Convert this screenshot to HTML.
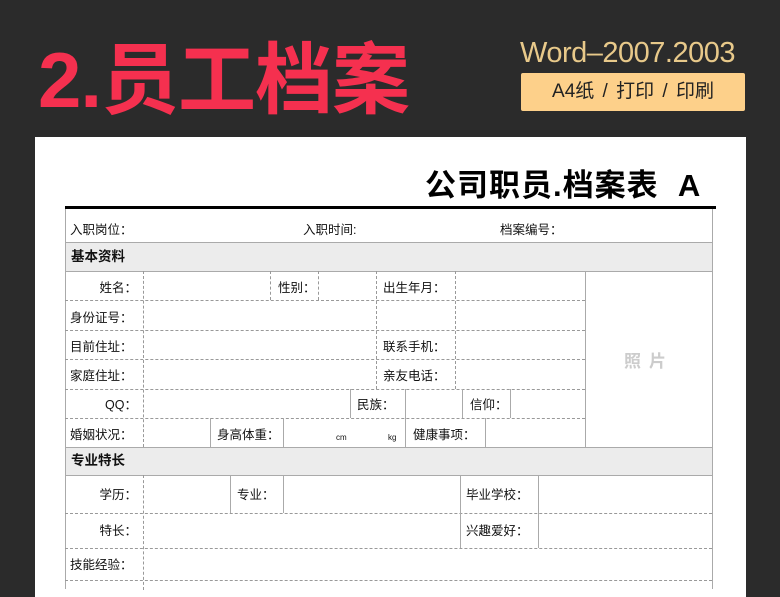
<!DOCTYPE html>
<html><head><meta charset="utf-8"><style>
*{margin:0;padding:0;box-sizing:border-box}
body{width:780px;height:585px;background:#2b2b2b;position:relative;overflow:hidden;font-family:"Liberation Sans","Noto Sans CJK SC",sans-serif}
.a{position:absolute}
.h{position:absolute;height:0;border-top:1px dashed #999}
.hs{position:absolute;height:0;border-top:1px solid #aaa}
.v{position:absolute;width:0;border-left:1px solid #aaa}
.vd{position:absolute;width:0;border-left:1px dashed #999}
.t{position:absolute;font-size:12.5px;color:#111;line-height:14px;white-space:nowrap}
.r{text-align:right;width:75px}
.sec{position:absolute;left:65px;width:647px;background:#ececec;font-weight:bold;font-size:13.5px;padding-left:6px;color:#111}
</style></head><body>
<div class="a" style="left:38px;top:30px;font-size:78px;font-weight:bold;color:#f5304f;line-height:100px;letter-spacing:-1px">2.员工档案</div>
<div class="a" style="left:520px;top:36px;font-size:29px;color:#e8c98a;line-height:34px;letter-spacing:-0.5px">Word–2007.2003</div>
<div class="a" style="left:521px;top:73px;width:224px;height:38px;background:#fdd08a;border-radius:2px;font-size:19px;color:#222;line-height:38px;text-align:center;word-spacing:3px">A4纸 / 打印 / 印刷</div>

<div class="a" style="left:35px;top:137px;width:711px;height:460px;background:#fff"></div>
<div class="a" style="left:425px;top:168px;font-size:31px;font-weight:bold;color:#000;line-height:36px;letter-spacing:1px">公司职员.档案表&nbsp;&nbsp;A</div>
<div class="a" style="left:65px;top:206px;width:651px;height:3px;background:#000"></div>

<div class="sec" style="top:242px;height:29px;line-height:29px">基本资料</div>
<div class="sec" style="top:447px;height:28px;line-height:28px">专业特长</div>

<div class="v" style="left:65px;top:209px;height:380px"></div>
<div class="v" style="left:712px;top:209px;height:380px"></div>
<div class="hs" style="left:65px;top:242px;width:647px"></div>
<div class="hs" style="left:65px;top:271px;width:647px"></div>
<div class="hs" style="left:65px;top:447px;width:647px"></div>
<div class="hs" style="left:65px;top:475px;width:647px"></div>
<div class="h" style="left:65px;top:300px;width:520px"></div>
<div class="h" style="left:65px;top:330px;width:520px"></div>
<div class="h" style="left:65px;top:359px;width:520px"></div>
<div class="h" style="left:65px;top:389px;width:520px"></div>
<div class="h" style="left:65px;top:418px;width:520px"></div>
<div class="h" style="left:65px;top:513px;width:647px"></div>
<div class="h" style="left:65px;top:548px;width:647px"></div>
<div class="h" style="left:65px;top:580px;width:647px"></div>

<div class="vd" style="left:143px;top:271px;height:176px"></div>
<div class="vd" style="left:143px;top:475px;height:115px"></div>
<div class="v" style="left:585px;top:271px;height:176px"></div>
<div class="vd" style="left:270px;top:271px;height:29px"></div>
<div class="vd" style="left:318px;top:271px;height:29px"></div>
<div class="vd" style="left:376px;top:271px;height:118px"></div>
<div class="vd" style="left:455px;top:271px;height:118px"></div>
<div class="v" style="left:350px;top:389px;height:29px"></div>
<div class="v" style="left:405px;top:389px;height:58px"></div>
<div class="v" style="left:462px;top:389px;height:29px"></div>
<div class="v" style="left:510px;top:389px;height:29px"></div>
<div class="v" style="left:210px;top:418px;height:29px"></div>
<div class="v" style="left:283px;top:418px;height:29px"></div>
<div class="v" style="left:485px;top:418px;height:29px"></div>
<div class="v" style="left:230px;top:475px;height:38px"></div>
<div class="v" style="left:283px;top:475px;height:38px"></div>
<div class="v" style="left:460px;top:475px;height:73px"></div>
<div class="v" style="left:538px;top:475px;height:73px"></div>

<div class="t" style="left:70px;top:223px">入职岗位：</div>
<div class="t" style="left:303px;top:223px">入职时间:</div>
<div class="t" style="left:500px;top:223px">档案编号：</div>

<div class="t r" style="left:62px;top:281px">姓名：</div>
<div class="t" style="left:278px;top:281px">性别：</div>
<div class="t" style="left:383px;top:281px">出生年月：</div>
<div class="t" style="left:70px;top:311px">身份证号：</div>
<div class="t" style="left:70px;top:340px">目前住址：</div>
<div class="t" style="left:383px;top:340px">联系手机：</div>
<div class="t" style="left:70px;top:369px">家庭住址：</div>
<div class="t" style="left:383px;top:369px">亲友电话：</div>
<div class="t r" style="left:62px;top:398px">QQ：</div>
<div class="t" style="left:357px;top:398px">民族：</div>
<div class="t" style="left:470px;top:398px">信仰：</div>
<div class="t" style="left:70px;top:428px">婚姻状况：</div>
<div class="t" style="left:217px;top:428px">身高体重：</div>
<div class="t" style="left:336px;top:431px;font-size:8px">cm</div>
<div class="t" style="left:388px;top:431px;font-size:8px">kg</div>
<div class="t" style="left:413px;top:428px">健康事项：</div>
<div class="a" style="left:624px;top:347px;font-size:17px;font-weight:bold;color:#ccc;letter-spacing:8px">照片</div>

<div class="t r" style="left:62px;top:488px">学历：</div>
<div class="t" style="left:237px;top:488px">专业：</div>
<div class="t" style="left:466px;top:488px">毕业学校：</div>
<div class="t r" style="left:62px;top:524px">特长：</div>
<div class="t" style="left:466px;top:524px">兴趣爱好：</div>
<div class="t" style="left:70px;top:558px">技能经验：</div>
</body></html>
